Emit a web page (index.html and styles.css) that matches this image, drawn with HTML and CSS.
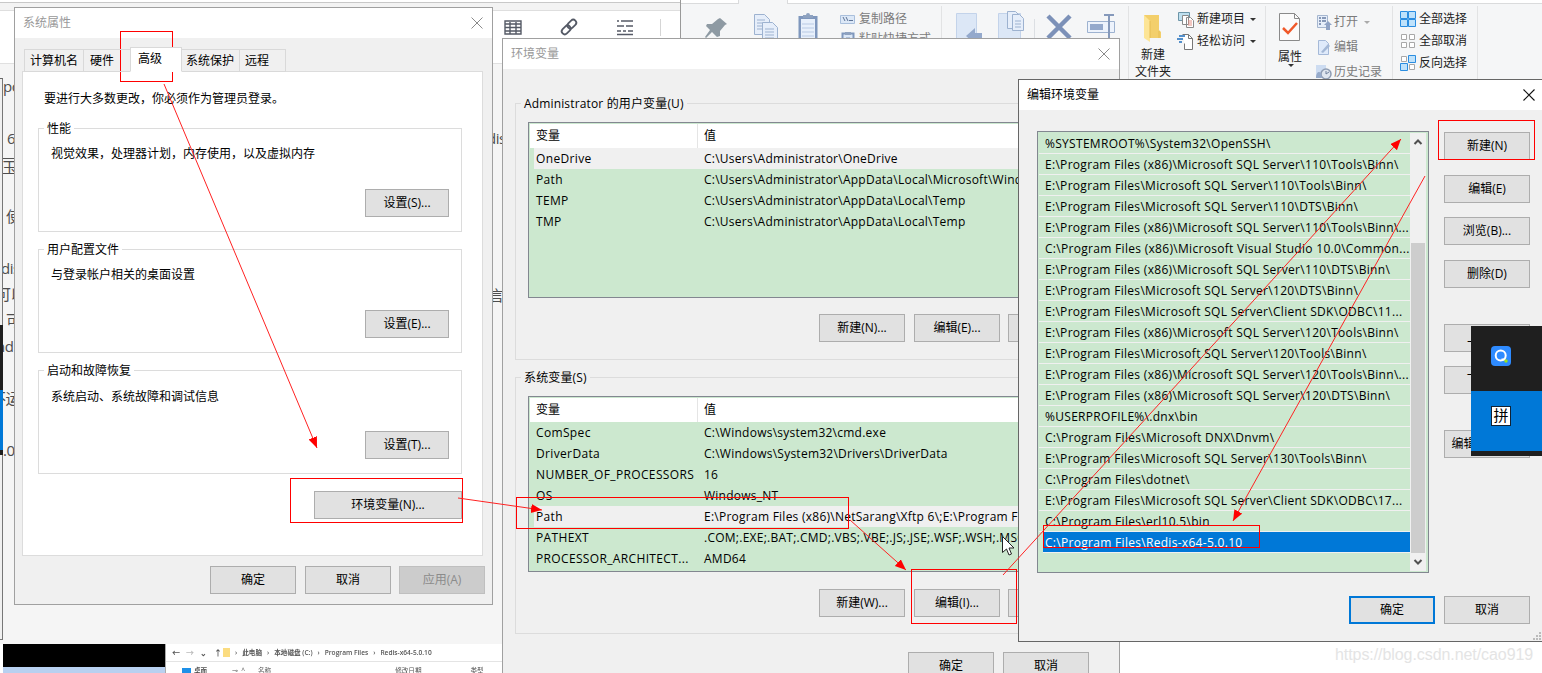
FILE: index.html
```html
<!DOCTYPE html>
<html lang="zh-CN">
<head>
    <meta charset="UTF-8">
    <title>环境变量</title>
    <link rel="stylesheet" href="styles.css">
</head>
<body>
<div class="desktop">

    <!-- editor page behind the dialogs -->
    <div class="page">
        <div class="page-top"></div>
        <div class="page-toolbar">
            <svg width="180" height="40" viewBox="0 0 180 40" fill="none" stroke="#555a66" stroke-width="1.4">
                <path d="M5 10h16v13h-16zM5 13h16M5 16.500h16M5 20h16M10 11v12M16 11v12"/>
                <g transform="rotate(-45 69 16)" stroke-width="1.8"><rect x="60" y="13" width="10" height="6" rx="3"/><rect x="68" y="13" width="10" height="6" rx="3"/></g>
                <path d="M117 10h2M121 10h12M117 15h7M126 15h7M117 20h4M123 20h3M128 20h5M117 23.500h16" stroke-width="1.6"/>
                <path d="M160.500 8v17" stroke="#d5d5d5" stroke-width="1"/>
            </svg>
        </div>
        <div class="page-bit" style="left:3px;top:76px">pc</div>
        <div class="page-bit" style="left:7px;top:128px">6</div>
        <div class="page-bit over" style="left:2px;top:158px">玉</div>
        <div class="page-bit" style="left:6px;top:206px">使</div>
        <div class="page-bit" style="left:1px;top:258px">dis</div>
        <div class="page-bit" style="left:-4px;top:284px">可以</div>
        <div class="page-bit" style="left:6px;top:310px">可</div>
        <div class="page-bit" style="left:-4px;top:336px">nd</div>
        <div class="page-bit" style="left:-9px;top:388px">不运</div>
        <div class="page-bit" style="left:3px;top:440px">.0</div>
        <div class="page-bit" style="left:487px;top:128px">dis</div>
        <div class="page-bit" style="left:489px;top:285px">言</div>
        <div class="edge">
            <div class="edge-black"></div>
            <div class="edge-blue"></div>
            <div class="edge-end"></div>
        </div>
    </div>

    <!-- small explorer at the bottom -->
    <div class="thumb">
        <div class="thumb-black"></div>
        <div class="thumb-main">
            <div class="thumb-path">
                <span class="nav">←</span><span class="nav dim">→</span><span class="nav">⌄</span><span class="nav">↑</span>
                <i class="mini-folder"></i>
                <span>›</span><span>此电脑</span><span>›</span><span>本地磁盘 (C:)</span><span>›</span><span>Program Files</span><span>›</span><span>Redis-x64-5.0.10</span>
            </div>
            <div class="thumb-cols">
                <i class="mini-desk"></i><b>桌面</b><span class="pin">⊸</span><span class="up">^</span>
                <span class="c1">名称</span><span class="c2">修改日期</span><span class="c3">类型</span>
            </div>
        </div>
    </div>

    <!-- explorer ribbon -->
    <div class="ribbon">
        <div class="ribbon-tabs"><div class="ribbon-tab"></div></div>
        <div class="ribbon-body">
            <div class="group g1">
                <svg class="big" width="150" height="60" viewBox="0 0 150 60">
                    <path d="M39 13l7 6-2 1-5 6 0 5-3 1-5-5-6 6-1-1 5-7-4-4 1-2h5l6-5z" fill="#8e9aa3"/>
                    <g stroke="#9db2d0" fill="#e6eefa">
                        <path d="M73.500 9.500h10l5 5v15h-15z"/><path d="M76 15h8M76 18h9M76 21h9M76 24h9"/>
                        <path d="M81.500 17.500h10l5 5v20h-15z"/><path d="M84 24h9M84 27h9M84 30h9M84 33h9"/>
                    </g>
                    <rect x="117.500" y="11" width="19" height="30" fill="#7f97bd"/>
                    <rect x="120" y="14" width="14" height="26" fill="#e8f0fb"/>
                    <path d="M121 19h12M121 23h12M121 27h12M121 31h12" stroke="#b9cae4"/>
                    <path d="M122 10h3a2 2 0 0 1 4 0h3v3h-10z" fill="#8ea2c0"/>
                </svg>
                <div class="cmds copy">
                    <div class="cmd dim"><svg width="16" height="16"><path d="M.5 4.500h14v8h-14z" fill="#dce8f7" stroke="#a9bfdc"/><path d="M3 6l2 4M6 6l2 4M9 9.500h4" stroke="#5d7396" fill="none"/></svg>复制路径</div>
                    <div class="cmd dim"><svg width="16" height="16"><path d="M2.500 2.500h11v12h-11z" fill="#dce8f7" stroke="#7f97bd" stroke-width="2"/><path d="M5 1h6v3h-6z" fill="#8ea2c0"/><path d="M6 7h4v4" fill="none" stroke="#7f97bd"/></svg>粘贴快捷方式</div>
                </div>
            </div>
            <div class="group g2">
                <svg width="186" height="60" viewBox="0 0 186 60">
                    <path d="M14.500 11.500h20v33h-20z" fill="#dce7f6" stroke="#c3d3ea"/>
                    <path d="M24 34l9-8v5h7v6h-7v5z" fill="#94a9cc"/>
                    <path d="M56.500 11.500h22v33h-22z" fill="#dce7f6" stroke="#c3d3ea"/>
                    <g stroke="#9db2d0" fill="#e6eefa"><path d="M65.500 9.500h8l3 3v14h-11z"/><path d="M70.500 12.500h7l4 4v12h-11z"/><path d="M73 19h6M73 22h6M73 25h6"/></g>
                    <path d="M92.500 17v30" stroke="#dcdfe3"/>
                    <path d="M106 14l22 22M128 14l-22 22" stroke="#7c91b8" stroke-width="4.500"/>
                    <path d="M145.500 19.500h27v11h-27z" fill="#edf3fc" stroke="#9db2d0"/><path d="M148 22h13v6h-13z" fill="#94a9cc"/>
                    <path d="M162 13h10M162 37h10M167 13v25" stroke="#8599bb" stroke-width="2"/>
                </svg>
            </div>
            <div class="group g3">
                <div class="tall">
                    <svg width="24" height="32" viewBox="0 0 24 32"><path d="M3 3h15v15l2 2v6H9z" fill="#f3cf6b"/><path d="M3 3l6 6v21l-6-4z" fill="#fde596"/><path d="M18 19v7M9 9v17" stroke="#e6bd55" fill="none"/></svg>
                    <span>新建<br>文件夹</span>
                </div>
                <div class="cmds">
                    <div class="cmd"><svg width="17" height="17"><path d="M1.500 1.500h11v8h-11z" fill="#bfe0ef" stroke="#6c95a8"/><path d="M5.500 4.500h6v9h-6zM9.500 6.500h4l3 3v7h-7z" fill="#fff" stroke="#8a8a8a"/><path d="M11 10h4M11 12h4M11 14h4" stroke="#e58f83"/></svg>新建项目<i class="arrow"></i></div>
                    <div class="cmd"><svg width="17" height="17"><path d="M5.500 1.500h6l4 4v11h-8v-6" fill="#fff" stroke="#777"/><path d="M11.500 1.500v4h4" fill="none" stroke="#777"/><path d="M2 3h6M0 6h6M2 9h3" stroke="#1f6fbd" stroke-width="1.500"/></svg>轻松访问<i class="arrow"></i></div>
                </div>
            </div>
            <div class="group g4">
                <div class="tall prop">
                    <svg width="24" height="32" viewBox="0 0 24 32"><path d="M1.500 1.500h15l5 5v22h-20z" fill="#fbfbfb" stroke="#8a8a8a"/><path d="M16.500 1.500v5h5" fill="none" stroke="#8a8a8a"/><path d="M5 16l5 5 9-10" fill="none" stroke="#f0592a" stroke-width="2.500"/></svg>
                    <span>属性</span><i class="arrow"></i>
                </div>
                <div class="cmds dims">
                    <div class="cmd dim"><svg width="16" height="16"><path d="M1.500 1.500h10v12h-10z" fill="#e6eefa" stroke="#a5b6cf"/><path d="M3 4h2M3 7h2M3 10h2M6 4h4M6 7h4" stroke="#8799b8" stroke-width="2"/><path d="M8 11l4-4 4 4h-2v5h-4v-5z" fill="#8fa3c6"/></svg>打开<i class="arrow"></i></div>
                    <div class="cmd dim"><svg width="16" height="16"><path d="M2.500 1.500h7l3 3v11h-10z" fill="#dfeafa" stroke="#a5b9d8"/><path d="M5 13l7-8 2 2-7 7z" fill="#a4b8d6"/></svg>编辑</div>
                    <div class="cmd dim"><svg width="16" height="16"><path d="M0 1h10v12h-10z" fill="#cddcf1"/><circle cx="10" cy="10" r="5" fill="#dfe6ef" stroke="#8f9db3" stroke-width="1.500"/><path d="M10 7v3l3-2" fill="none" stroke="#70819d"/><path d="M0 14c0-6 3-7 5-5l1 5z" fill="#96aaca"/></svg>历史记录</div>
                </div>
            </div>
            <div class="group g5">
                <div class="cmds">
                    <div class="cmd"><svg width="16" height="16" fill="#bfe2fb" stroke="#2b8de0"><path d="M.5.5h7v7h-7zM8.500.5h7v7h-7zM.5 8.500h7v7h-7zM8.500 8.500h7v7h-7z"/></svg>全部选择</div>
                    <div class="cmd"><svg width="16" height="16" fill="#fff" stroke="#a8a8a8"><path d="M1.500 1.500h5v5h-5zM9.500 1.500h5v5h-5zM1.500 9.500h5v5h-5zM9.500 9.500h5v5h-5z"/></svg>全部取消</div>
                    <div class="cmd"><svg width="16" height="16"><path d="M1.500 1.500h5v5h-5zM9.500 9.500h5v5h-5z" fill="#fff" stroke="#a8a8a8"/><path d="M8.500.5h7v7h-7zM.5 8.500h7v7h-7z" fill="#bfe2fb" stroke="#2b8de0"/></svg>反向选择</div>
                </div>
            </div>
        </div>
    </div>

    <!-- system properties -->
    <div class="window sys">
        <div class="titlebar">系统属性<svg class="close" width="12" height="12"><path d="M.5.5l11 11M11.500.5l-11 11"/></svg></div>
        <div class="tabs">
            <div class="tab t1">计算机名</div>
            <div class="tab t2">硬件</div>
            <div class="tab active">高级</div>
            <div class="tab t4">系统保护</div>
            <div class="tab t5">远程</div>
        </div>
        <div class="panel">
            <p class="note">要进行大多数更改，你必须作为管理员登录。</p>
            <div class="box">
                <div class="legend">性能</div>
                <p>视觉效果，处理器计划，内存使用，以及虚拟内存</p>
                <div class="btn">设置(S)...</div>
            </div>
            <div class="box">
                <div class="legend">用户配置文件</div>
                <p>与登录帐户相关的桌面设置</p>
                <div class="btn">设置(E)...</div>
            </div>
            <div class="box recovery">
                <div class="legend">启动和故障恢复</div>
                <p>系统启动、系统故障和调试信息</p>
                <div class="btn">设置(T)...</div>
            </div>
            <div class="btn env-btn">环境变量(N)...</div>
        </div>
        <div class="actions">
            <div class="btn">确定</div>
            <div class="btn">取消</div>
            <div class="btn disabled">应用(A)</div>
        </div>
    </div>

    <!-- environment variables -->
    <div class="window env">
        <div class="titlebar">环境变量<svg class="close" width="12" height="12"><path d="M.5.5l11 11M11.500.5l-11 11"/></svg></div>
        <div class="vars user">
            <div class="legend">Administrator 的用户变量(U)</div>
            <div class="list">
                <div class="row head"><span>变量</span><span>值</span></div>
                <div class="row sel"><span>OneDrive</span><span>C:\Users\Administrator\OneDrive</span></div>
                <div class="row"><span>Path</span><span>C:\Users\Administrator\AppData\Local\Microsoft\WindowsApps;</span></div>
                <div class="row"><span>TEMP</span><span>C:\Users\Administrator\AppData\Local\Temp</span></div>
                <div class="row"><span>TMP</span><span>C:\Users\Administrator\AppData\Local\Temp</span></div>
            </div>
            <div class="btns">
                <div class="btn">新建(N)...</div>
                <div class="btn">编辑(E)...</div>
                <div class="btn"></div>
            </div>
        </div>
        <div class="vars system">
            <div class="legend">系统变量(S)</div>
            <div class="list">
                <div class="row head"><span>变量</span><span>值</span></div>
                <div class="row"><span>ComSpec</span><span>C:\Windows\system32\cmd.exe</span></div>
                <div class="row"><span>DriverData</span><span>C:\Windows\System32\Drivers\DriverData</span></div>
                <div class="row"><span>NUMBER_OF_PROCESSORS</span><span>16</span></div>
                <div class="row"><span>OS</span><span>Windows_NT</span></div>
                <div class="row sel"><span>Path</span><span>E:\Program Files (x86)\NetSarang\Xftp 6\;E:\Program Files</span></div>
                <div class="row"><span>PATHEXT</span><span>.COM;.EXE;.BAT;.CMD;.VBS;.VBE;.JS;.JSE;.WSF;.WSH;.MSC</span></div>
                <div class="row"><span>PROCESSOR_ARCHITECT...</span><span>AMD64</span></div>
            </div>
            <div class="btns">
                <div class="btn">新建(W)...</div>
                <div class="btn">编辑(I)...</div>
                <div class="btn"></div>
            </div>
        </div>
        <div class="actions">
            <div class="btn">确定</div>
            <div class="btn">取消</div>
        </div>
    </div>

    <!-- edit Path -->
    <div class="window edit">
        <div class="titlebar">编辑环境变量<svg class="close" width="12" height="12"><path d="M.5.5l11 11M11.500.5l-11 11"/></svg></div>
        <div class="edit-body">
            <div class="paths">
                <div class="path-rows">
                    <div>%SYSTEMROOT%\System32\OpenSSH\</div>
                    <div>E:\Program Files (x86)\Microsoft SQL Server\110\Tools\Binn\</div>
                    <div>E:\Program Files\Microsoft SQL Server\110\Tools\Binn\</div>
                    <div>E:\Program Files\Microsoft SQL Server\110\DTS\Binn\</div>
                    <div>E:\Program Files (x86)\Microsoft SQL Server\110\Tools\Binn\...</div>
                    <div>C:\Program Files (x86)\Microsoft Visual Studio 10.0\Common...</div>
                    <div>E:\Program Files (x86)\Microsoft SQL Server\110\DTS\Binn\</div>
                    <div>E:\Program Files\Microsoft SQL Server\120\DTS\Binn\</div>
                    <div>E:\Program Files\Microsoft SQL Server\Client SDK\ODBC\11...</div>
                    <div>E:\Program Files (x86)\Microsoft SQL Server\120\Tools\Binn\</div>
                    <div>E:\Program Files\Microsoft SQL Server\120\Tools\Binn\</div>
                    <div>E:\Program Files (x86)\Microsoft SQL Server\120\Tools\Binn\...</div>
                    <div>E:\Program Files (x86)\Microsoft SQL Server\120\DTS\Binn\</div>
                    <div>%USERPROFILE%\.dnx\bin</div>
                    <div>C:\Program Files\Microsoft DNX\Dnvm\</div>
                    <div>E:\Program Files\Microsoft SQL Server\130\Tools\Binn\</div>
                    <div>C:\Program Files\dotnet\</div>
                    <div>E:\Program Files\Microsoft SQL Server\Client SDK\ODBC\17...</div>
                    <div>C:\Program Files\erl10.5\bin</div>
                    <div class="picked">C:\Program Files\Redis-x64-5.0.10</div>
                </div>
                <div class="scroll">
                    <svg width="16" height="18"><path d="M4.500 11l3.500-3.500 3.500 3.500" fill="none" stroke="#505050" stroke-width="2"/></svg>
                    <div class="knob"></div>
                    <svg width="16" height="18"><path d="M4.500 7l3.500 3.500 3.500-3.500" fill="none" stroke="#505050" stroke-width="2"/></svg>
                </div>
            </div>
            <div class="side">
                <div class="btn">新建(N)</div>
                <div class="btn">编辑(E)</div>
                <div class="btn">浏览(B)...</div>
                <div class="btn">删除(D)</div>
                <div class="btn up">上移(U)</div>
                <div class="btn">下移(O)</div>
                <div class="btn text">编辑文本(T)...</div>
            </div>
        </div>
        <div class="actions">
            <div class="btn default">确定</div>
            <div class="btn">取消</div>
        </div>
        <svg class="grip" width="9" height="9" fill="#bbb"><path d="M6 0h2v2h-2zM3 3h2v2h-2zM6 3h2v2h-2zM0 6h2v2h-2zM3 6h2v2h-2zM6 6h2v2h-2z"/></svg>
    </div>

    <!-- input method switcher -->
    <div class="ime">
        <div class="ime-q"><svg width="20" height="20"><rect width="20" height="20" rx="4" fill="#2e8bff"/><circle cx="9.700" cy="9.500" r="5" fill="none" stroke="#fff" stroke-width="2"/><path d="M10.500 13.500h4" stroke="#fff" stroke-width="2"/><circle cx="15" cy="15" r="1.700" fill="#9be51b"/></svg></div>
        <div class="ime-pin"><span>拼</span></div>
    </div>

    <div class="watermark">https://blog.csdn.net/cao919</div>

    <!-- red marks and mouse pointer -->
    <svg class="marks" width="1542" height="673" viewBox="0 0 1542 673">
        <defs>
            <marker id="tip" markerUnits="userSpaceOnUse" markerWidth="12" markerHeight="10" refX="11" refY="4.500" orient="auto"><path d="M0 0l11 4.500L0 9z" fill="#f00"/></marker>
        </defs>
        <g class="rects">
            <rect x="120.500" y="31.500" width="52" height="50"/>
            <rect x="290.500" y="478.500" width="172" height="44"/>
            <rect x="516.500" y="497.500" width="332" height="31"/>
            <rect x="911.500" y="569.500" width="105" height="54"/>
            <rect x="1438.500" y="120.500" width="96" height="39"/>
            <rect x="1043.500" y="525.500" width="216" height="22"/>
        </g>
        <g class="lines">
            <path d="M164 84L317 448"/>
            <path d="M458 498L542 510"/>
            <path d="M850 520L906 570"/>
            <path d="M1003 575L1401 139"/>
            <path d="M1425 176L1233 521"/>
        </g>
        <path d="M1002.500 536.500v16l4-3.500 2.500 6 2.500-1-2.500-6h5z" fill="#fff" stroke="#222"/>
    </svg>
</div>
</body>
</html>
```
FILE: styles.css
```css
body {
    margin: 0;
    font-family: "Open Sans", "Noto Sans CJK SC", sans-serif;
    font-size: 12px;
    line-height: 16px;
    color: #000;
}

p {
    margin: 0;
}

.desktop {
    position: relative;
    width: 1542px;
    height: 673px;
    overflow: hidden;
    background: #fff;
    white-space: nowrap;
}

/* page in the background */
.page {
    position: absolute;
    left: 0;
    top: 0;
    width: 680px;
    height: 644px;
    background: #f5f5f5;
    overflow: hidden;
}

.page-top {
    height: 7px;
    margin-top: 2px;
    border-top: 1px solid #c8c8c8;
    border-bottom: 1px solid #dedede;
    background: #f3f3f3;
    box-shadow: 0 -2px #fff;
}

.page-toolbar {
    height: 52px;
    padding-left: 500px;
    background: #fff;
    border-bottom: 1px solid #e0e0e0;
}

.page-bit {
    position: absolute;
    font-size: 15px;
    line-height: 20px;
    letter-spacing: -0.5px;
    color: #4d4d4d;
}

.over {
    border-top: 1px solid #555;
    line-height: 16px;
}

.edge {
    position: absolute;
    left: 0;
    top: 78px;
    width: 3px;
    height: 562px;
    padding-top: 246px;
    box-sizing: border-box;
    border-top: 1px solid #666;
    border-right: 1px solid #777;
    border-bottom: 1px solid #777;
    background: #f0f0f0;
}

.edge-black {
    width: 3px;
    height: 65px;
    background: #1f1f1f;
}

.edge-blue {
    width: 3px;
    height: 60px;
    background: #0078d7;
}

.edge-end {
    width: 3px;
    height: 5px;
    background: #1f1f1f;
}

/* small explorer */
.thumb {
    position: absolute;
    left: 3px;
    top: 644px;
    width: 499px;
    height: 29px;
    display: flex;
    background: #fff;
    font-size: 8px;
    color: #555;
}

.thumb-black {
    width: 162px;
    height: 23px;
    background: #000;
    border-bottom: 6px solid #b8d0f0;
}

.thumb-main {
    flex: 1;
    border-left: 1px solid #aaa;
    overflow: hidden;
}

.thumb-path {
    height: 17px;
    display: flex;
    align-items: center;
    gap: 5px;
    padding-left: 6px;
    border-bottom: 1px solid #e4e4e4;
    font-size: 6.6px;
    font-weight: 600;
    filter: blur(0.3px);
}

.thumb-path .nav {
    width: 9px;
    font-size: 8px;
}

.dim {
    color: #bbb;
}

.mini-folder {
    width: 7px;
    height: 9px;
    margin-left: -5px;
    background: #fbdc80;
}

.thumb-cols {
    display: flex;
    padding: 3px 0 0 16px;
    line-height: 12px;
    font-size: 6.6px;
    filter: blur(0.3px);
}

.mini-desk {
    width: 9px;
    height: 8px;
    margin: 3px 3px 0 0;
    background: #1e90e8;
}

.thumb-cols .pin {
    margin-left: 25px;
}

.thumb-cols .up {
    margin-left: 3px;
}

.thumb-cols .c1 {
    margin-left: 13px;
}

.thumb-cols .c2 {
    margin-left: 124px;
}

.thumb-cols .c3 {
    margin-left: 49px;
}

/* ribbon */
.ribbon {
    position: absolute;
    left: 680px;
    top: 0;
    width: 861px;
    height: 80px;
    border-left: 1px solid #999;
    background: #f5f6f7;
    overflow: hidden;
}

.ribbon-tabs {
    height: 4px;
    background: linear-gradient(#fff 3px, #dadbdc 3px);
    padding-left: 57px;
}

.ribbon-tab {
    width: 48px;
    height: 4px;
    background: #f5f6f7;
    border-left: 1px solid #dadbdc;
    border-right: 1px solid #dadbdc;
}

.ribbon-body {
    display: flex;
    height: 76px;
}

.group {
    display: flex;
    box-sizing: border-box;
    margin-top: 2px;
    border-right: 1px solid #e2e3e4;
    overflow: hidden;
}

.g1 {
    width: 261px;
}

.g2 {
    width: 187px;
}

.g3 {
    width: 137px;
}

.g4 {
    width: 127px;
}

.g5 {
    width: 85px;
}

.cmds {
    display: flex;
    flex-direction: column;
    gap: 6px;
    padding-top: 5px;
}

.cmd {
    display: flex;
    align-items: center;
    height: 16px;
    gap: 2px;
    color: #222;
}

.cmd svg {
    flex: none;
}

.cmd.dim {
    color: #7b7b7b;
}

.copy {
    padding-left: 9px;
    gap: 4px;
}

.copy .cmd {
    gap: 3px;
}

.g1 > svg {
    margin-top: -1px;
}

.g2 > svg {
    margin-top: -4px;
}

.g3 .cmds {
    padding-left: 4px;
}

.g3 .cmds .cmd {
    gap: 3px;
}

.g5 .cmds {
    padding-left: 7px;
}

.g5 .cmd {
    gap: 3px;
}

.dims {
    padding: 8px 0 0 8px;
    gap: 9px;
}

.dims .cmd {
    gap: 2px;
}

.g3 .arrow,
.arrow {
    margin-left: 4px;
    border: 3px solid transparent;
    border-top-color: #333;
    border-bottom: 0;
}

.g3 .arrow {
    margin-left: 2px;
}

.dim .arrow {
    border-top-color: #aaa;
}

.tall {
    width: 40px;
    padding: 6px 0 0 4px;
    display: flex;
    flex-direction: column;
    align-items: center;
    line-height: 17px;
    text-align: center;
    color: #222;
}

.tall span {
    margin-top: 2px;
}

.tall.prop {
    width: 36px;
    padding-left: 6px;
}

.tall.prop span {
    margin-top: 4px;
}

.tall.prop .arrow {
    margin: -1px 0 0 2px;
}

/* dialogs */
.window {
    position: absolute;
    box-sizing: border-box;
    background: #f0f0f0;
    border: 1px solid #a0a0a0;
}

.titlebar {
    height: 30px;
    display: flex;
    align-items: center;
    justify-content: space-between;
    padding: 0 9px 0 8px;
    background: #fff;
    color: #999;
}

.close {
    fill: none;
    stroke: #8a8a8a;
    stroke-width: 1;
}

.btn {
    width: 86px;
    height: 28px;
    box-sizing: border-box;
    border: 1px solid #adadad;
    background: #e1e1e1;
    line-height: 26px;
    text-align: center;
}

.btn.disabled {
    background: #ccc;
    border-color: #bfbfbf;
    color: #8b8b8b;
}

.btn.default {
    border: 2px solid #0078d7;
    line-height: 24px;
}

.legend {
    position: absolute;
    left: 5px;
    top: -8px;
    padding: 0 3px;
    background: inherit;
}

.actions {
    display: flex;
    gap: 9px;
}

/* system properties */
.sys {
    left: 14px;
    top: 7px;
    width: 479px;
    height: 598px;
}

.tabs {
    display: flex;
    align-items: flex-end;
    height: 25px;
    padding: 9px 0 0 9px;
    position: relative;
    z-index: 1;
    margin-bottom: -1px;
}

.tab {
    box-sizing: border-box;
    height: 23px;
    border: 1px solid #d9d9d9;
    border-right: 0;
    padding-left: 5px;
    line-height: 22px;
}

.t1 {
    width: 59px;
}

.t2 {
    width: 47px;
    padding-left: 6px;
}

.tab.active {
    width: 52px;
    height: 25px;
    padding-left: 7px;
    line-height: 22px;
    background: #fff;
    border-right: 1px solid #d9d9d9;
    border-bottom-color: #fff;
}

.t4 {
    width: 57px;
    border-left: 0;
    padding-left: 4px;
}

.t5 {
    width: 47px;
    border-right: 1px solid #d9d9d9;
}

.panel {
    box-sizing: border-box;
    width: 461px;
    height: 485px;
    margin-left: 7px;
    padding: 19px 20px 0 15px;
    background: #fff;
    border: 1px solid #dcdcdc;
}

.note {
    padding-left: 6px;
}

.box {
    position: relative;
    box-sizing: border-box;
    height: 104px;
    margin-bottom: 17px;
    padding: 17px 12px 0;
    border: 1px solid #dcdcdc;
    background: #fff;
}

.note + .box {
    margin-top: 21px;
}

.box .btn {
    width: 84px;
    margin: 27px 0 0 auto;
}

.recovery {
    padding-top: 18px;
}

.recovery .btn {
    margin-top: 26px;
}

.env-btn {
    width: 148px;
    margin-left: auto;
}

.sys .actions {
    padding: 10px 7px 0 0;
    justify-content: flex-end;
}

.sys .disabled {
    margin-left: -1px;
}

/* environment variables */
.env {
    left: 502px;
    top: 38px;
    width: 618px;
    height: 660px;
}

.vars {
    position: relative;
    box-sizing: border-box;
    width: 592px;
    height: 257px;
    margin-left: 12px;
    padding: 18px 0 0 12px;
    border: 1px solid #dcdcdc;
    background: #f0f0f0;
}

.vars.user {
    margin-top: 34px;
    margin-bottom: 17px;
}

.vars .legend {
    letter-spacing: 0.15px;
}

.list {
    box-sizing: border-box;
    width: 566px;
    height: 176px;
    padding: 1px;
    border: 1px solid #828790;
    background: #cce8cf;
    overflow: hidden;
    letter-spacing: 0.25px;
}

.row {
    display: grid;
    grid-template-columns: 164px 1fr;
    height: 21px;
    line-height: 21px;
    margin-left: 4px;
}

.row span {
    padding-left: 2px;
}

.row span:first-child {
    letter-spacing: 0.35px;
}

.row span + span {
    padding-left: 6px;
}

.row.sel {
    background: #f0f0f0;
}

.row.head {
    height: 24px;
    line-height: 23px;
    margin-left: 0;
    grid-template-columns: 167px 1fr;
    background: #fff;
}

.row.head span,
.row.head span:first-child {
    padding-left: 6px;
    letter-spacing: 0;
}

.row.head span + span {
    border-left: 1px solid #e5e5e5;
}

.btns {
    display: flex;
    gap: 9px;
    margin: 16px 0 0 291px;
}

.btns .btn:last-child {
    margin-left: -1px;
}

.system .btns {
    margin-top: 17px;
}

.env .actions {
    margin: 18px 0 0 405px;
}

/* edit dialog */
.edit {
    left: 1018px;
    top: 79px;
    width: 530px;
    height: 563px;
    border-color: #666;
}

.edit .titlebar {
    color: #000;
    padding-right: 12px;
}

.edit .close {
    stroke: #111;
    stroke-width: 1.1;
}

.edit-body {
    display: flex;
    gap: 15px;
    padding: 21px 0 0 18px;
}

.paths {
    box-sizing: border-box;
    width: 392px;
    height: 442px;
    padding: 1px;
    display: flex;
    border: 1px solid #828790;
    background: #cce8cf;
}

.path-rows {
    width: 371px;
    overflow: hidden;
    letter-spacing: 0.3px;
}

.path-rows div {
    height: 20px;
    line-height: 21px;
    padding-left: 6px;
    border-bottom: 1px solid #f0f0f0;
}

.path-rows .picked {
    margin-left: 4px;
    padding-left: 2px;
    background: #0078d7;
    color: #fff;
}

.scroll {
    display: flex;
    flex-direction: column;
    width: 16px;
    background: #f0f0f0;
}

.knob {
    height: 311px;
    width: 14px;
    margin: 92px 0 0 1px;
    background: #cdcdcd;
}

.side {
    display: flex;
    flex-direction: column;
    gap: 14.5px;
    padding-top: 1px;
}

.side .up {
    margin-top: 21.5px;
}

.side .text {
    margin-top: 21.5px;
}

.edit .actions {
    margin: 23px 0 0 330px;
}

.grip {
    position: absolute;
    left: 514px;
    top: 552px;
}

/* input method bar */
.ime {
    position: absolute;
    left: 1471px;
    top: 326px;
    width: 71px;
    height: 130px;
    background: #1f1f1f;
}

.ime-q {
    height: 45px;
    padding: 20px 0 0 20px;
}

.ime-pin {
    height: 45px;
    padding: 15px 0 0 20px;
    background: #0078d7;
}

.ime-pin span {
    display: block;
    width: 18px;
    height: 18px;
    border: 1px solid #123;
    background: #fff;
    font-size: 15px;
    line-height: 17px;
    text-align: center;
}

.watermark {
    position: absolute;
    left: 1335px;
    top: 645px;
    font-family: "Liberation Sans", sans-serif;
    font-size: 16px;
    line-height: 20px;
    letter-spacing: -0.07px;
    color: #e4e4e4;
}

.marks {
    position: absolute;
    left: 0;
    top: 0;
}

.rects {
    fill: none;
    stroke: #f00;
}

.lines {
    fill: none;
    stroke: #f22;
    stroke-width: 1;
}

.lines path {
    marker-end: url(#tip);
}
```
